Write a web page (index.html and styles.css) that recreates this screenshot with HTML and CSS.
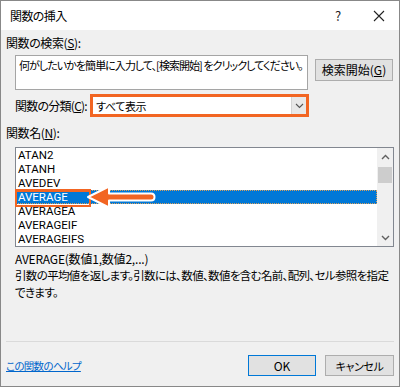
FILE: index.html
```html
<!DOCTYPE html>
<html lang="ja">
<head>
<meta charset="utf-8">
<link rel="stylesheet" href="styles.css">
</head>
<body>
<div class="dialog">
  <div class="titlebar">
    <span class="title">関数の挿入</span>
    <span class="help">?</span>
    <span class="close"><svg width="12" height="12" viewBox="0 0 12 12"><path d="M1 1 L11 11 M11 1 L1 11" stroke="#222" stroke-width="1.1" fill="none"/></svg></span>
  </div>
  <div class="body">
    <div class="label lbl-search">関数の検索(<u>S</u>):</div>
    <div class="search-row">
      <div class="search-box">何がしたいかを簡単に入力して、[検索開始] をクリックしてください。</div>
      <div class="btn btn-search">検索開始(<u>G</u>)</div>
    </div>
    <div class="cat-row">
      <span class="cat-label">関数の分類(<u>C</u>):</span>
      <div class="select-hl">
        <div class="select">
          <span class="select-text">すべて表示</span>
          <span class="select-arrow"><svg width="9" height="6" viewBox="0 0 9 6"><path d="M1 1 L4.5 4.5 L8 1" stroke="#555" stroke-width="1.1" fill="none"/></svg></span>
        </div>
      </div>
    </div>
    <div class="label lbl-names">関数名(<u>N</u>):</div>
    <div class="list-wrap">
      <div class="listbox">
        <ul class="items">
          <li class="item">ATAN2</li>
          <li class="item">ATANH</li>
          <li class="item">AVEDEV</li>
          <li class="item selected">AVERAGE</li>
          <li class="item">AVERAGEA</li>
          <li class="item">AVERAGEIF</li>
          <li class="item">AVERAGEIFS</li>
        </ul>
        <div class="scrollbar">
          <div class="sb-btn"><svg width="9" height="6" viewBox="0 0 9 6"><path d="M1 5 L4.5 1.5 L8 5" stroke="#606060" stroke-width="1.4" fill="none"/></svg></div>
          <div class="sb-thumb"></div>
          <div class="sb-track"></div>
          <div class="sb-btn"><svg width="9" height="6" viewBox="0 0 9 6"><path d="M1 1 L4.5 4.5 L8 1" stroke="#606060" stroke-width="1.4" fill="none"/></svg></div>
        </div>
      </div>
      <div class="hl-box"></div>
      <svg class="arrow" width="379" height="100" viewBox="0 0 379 100">
        <path d="M73 50 L94 39.5 L94 46.5 L136 46.5 Q139.5 46.5 139.5 50 Q139.5 53.5 136 53.5 L94 53.5 L94 60.5 Z" fill="#f26522" stroke="#ffffff" stroke-width="2" stroke-linejoin="round"/>
      </svg>
    </div>
    <div class="desc">
      <div class="syntax">AVERAGE(数値1,数値2,...)</div>
      <div class="explain">引数の平均値を返します。引数には、数値、数値を含む名前、配列、セル参照を指定<br>できます。</div>
    </div>
    <div class="spacer"></div>
    <div class="sep"></div>
    <div class="footer">
      <a class="help-link" href="#">この関数のヘルプ</a>
      <div class="btn btn-ok">OK</div>
      <div class="btn btn-cancel"><span class="cancel-text">キャンセル</span></div>
    </div>
  </div>
</div>
</body>
</html>
```

FILE: styles.css
```css
* { box-sizing: border-box; }
html, body { margin: 0; padding: 0; }
body {
  width: 400px;
  height: 387px;
  font-family: "Noto Sans CJK JP", "Noto Sans", sans-serif;
  font-size: 12px;
  font-feature-settings: "palt";
  color: #000;
  background: #fff;
}
u { text-decoration: underline; text-underline-offset: 1px; }
.dialog {
  width: 400px;
  height: 387px;
  border: 1px solid #888;
  display: flex;
  flex-direction: column;
  background: #f0f0f0;
}
.titlebar {
  height: 29px;
  background: #fff;
  display: flex;
  align-items: center;
  padding-left: 9px;
  flex: none;
}
.title { font-size: 12px; line-height: 16px; letter-spacing: -0.6px; }
.help {
  margin-left: auto;
  font-size: 13px;
  color: #222;
  width: 12px;
  text-align: center;
  margin-right: 29px;
}
.close {
  display: flex;
  width: 12px;
  height: 12px;
  margin-right: 14px;
}
.body {
  flex: 1;
  display: flex;
  flex-direction: column;
  padding: 5px 5px 10px 5px;
  line-height: 16px;
}
.label { height: 16px; white-space: nowrap; letter-spacing: -0.4px; }
.search-row {
  display: flex;
  margin: 4px 0 0 9px;
}
.search-box {
  width: 293px;
  height: 35px;
  background: #fff;
  border: 1px solid #a5a5a5;
  padding: 1px 3px;
  white-space: nowrap;
  overflow: hidden;
  font-size: 11px;
  letter-spacing: -0.95px;
}
.btn {
  background: #e1e1e1;
  border: 1px solid #adadad;
  display: flex;
  align-items: center;
  justify-content: center;
  white-space: nowrap;
}
.btn-search {
  width: 78px;
  height: 22px;
  margin: 4px 0 0 7px;
}
.cat-row {
  display: flex;
  align-items: center;
  margin: 4px 0 0 9px;
}
.cat-label { width: 75px; white-space: nowrap; letter-spacing: -0.75px; }
.select-hl {
  width: 219px;
  height: 23px;
  border: 3px solid #f26522;
}
.select {
  height: 100%;
  background: #fff;
  display: flex;
  align-items: center;
}
.select-text {
  padding-left: 3px;
  flex: 1;
  font-size: 11px;
  letter-spacing: -0.4px;
}
.select-arrow {
  width: 15px;
  height: 100%;
  background: #e8e8e8;
  border-left: 1px solid #d4d4d4;
  display: flex;
  align-items: center;
  justify-content: center;
}
.lbl-names { margin-top: 8px; }
.list-wrap {
  position: relative;
  margin: 6px 0 0 9px;
  width: 379px;
  height: 100px;
}
.listbox {
  width: 379px;
  height: 100px;
  border: 1px solid #828790;
  background: #fff;
  display: flex;
}
.items {
  list-style: none;
  margin: 0;
  padding: 0;
  width: 361px;
  font-family: Roboto, "Noto Sans", sans-serif;
  font-size: 11.5px;
}
.item {
  height: 14px;
  line-height: 14px;
  padding-left: 2px;
  white-space: nowrap;
}
.item.selected {
  background: #0078d7;
  color: #fff;
  outline: 1px dotted #d9a05b;
  outline-offset: -1px;
}
.scrollbar {
  width: 16px;
  background: #f0f0f0;
  display: flex;
  flex-direction: column;
}
.sb-btn {
  height: 17px;
  display: flex;
  align-items: center;
  justify-content: center;
}
.sb-thumb {
  height: 16px;
  margin: 2px 1px 0 1px;
  background: #cdcdcd;
}
.sb-track { flex: 1; }
.hl-box {
  position: absolute;
  left: 0;
  top: 42px;
  width: 76px;
  height: 18px;
  border: 3px solid #f26522;
  border-width: 3px 2px 2px 2px;
}
.arrow {
  position: absolute;
  left: 0;
  top: 0;
}
.desc {
  margin: 3px 0 0 9px;
  line-height: 17px;
  white-space: nowrap;
}
.syntax { letter-spacing: -0.2px; }
.explain { font-size: 11.5px; letter-spacing: -0.65px; }
.spacer { flex: 1; }
.sep {
  height: 1px;
  background: #dadada;
  flex: none;
}
.footer {
  display: flex;
  align-items: center;
  margin-top: 13px;
  height: 21px;
  flex: none;
}
.help-link {
  color: #0066cc;
  text-decoration: underline;
  margin-right: auto;
  font-size: 10.5px;
  letter-spacing: -0.7px;
}
.btn-ok {
  width: 68px;
  height: 21px;
  border-color: #0078d7;
}
.btn-cancel {
  width: 69px;
  height: 21px;
  margin-left: 9px;
}
.cancel-text { font-size: 11px; letter-spacing: -0.4px; }
```
